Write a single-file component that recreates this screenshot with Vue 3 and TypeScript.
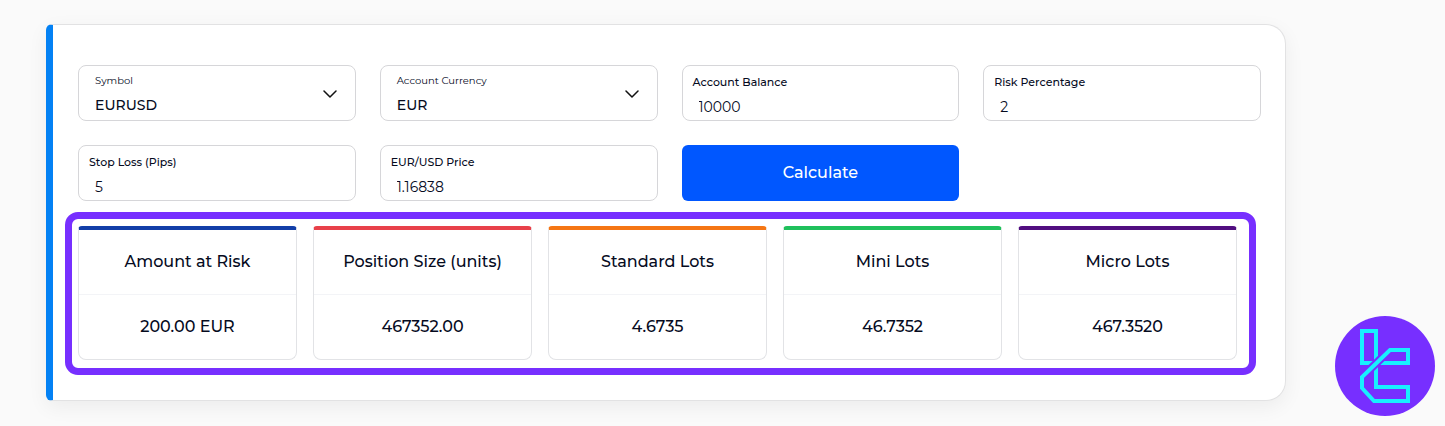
<script setup lang="ts">
import { ref } from 'vue'

const symbol = ref('EURUSD')
const currency = ref('EUR')
const balance = ref('10000')
const risk = ref('2')
const stopLoss = ref('5')
const price = ref('1.16838')

interface Result {
  title: string
  value: string
  tone: string
}

const results = ref<Result[]>([
  { title: 'Amount at Risk', value: '200.00 EUR', tone: 'blue' },
  { title: 'Position Size (units)', value: '467352.00', tone: 'red' },
  { title: 'Standard Lots', value: '4.6735', tone: 'orange' },
  { title: 'Mini Lots', value: '46.7352', tone: 'green' },
  { title: 'Micro Lots', value: '467.3520', tone: 'purple' },
])

function calculate(): void {
  const amount = (Number(balance.value) * Number(risk.value)) / 100
  const units = amount / (Number(stopLoss.value) * 0.0001 / Number(price.value))
  const values = [
    `${amount.toFixed(2)} ${currency.value}`,
    units.toFixed(2),
    (units / 100000).toFixed(4),
    (units / 10000).toFixed(4),
    (units / 1000).toFixed(4),
  ]
  results.value = results.value.map((r, i) => ({ ...r, value: values[i] }))
}
</script>

<template>
  <main class="page">
    <section class="panel">
      <form class="fields" @submit.prevent="calculate">
        <div class="field field-select">
          <label for="symbol">Symbol</label>
          <select id="symbol" v-model="symbol">
            <option>EURUSD</option>
          </select>
          <svg class="chevron" viewBox="0 0 14 8" aria-hidden="true"><path d="M1 1l6 6 6-6" /></svg>
        </div>
        <div class="field field-select">
          <label for="currency">Account Currency</label>
          <select id="currency" v-model="currency">
            <option>EUR</option>
          </select>
          <svg class="chevron" viewBox="0 0 14 8" aria-hidden="true"><path d="M1 1l6 6 6-6" /></svg>
        </div>
        <div class="field">
          <label for="balance">Account Balance</label>
          <input id="balance" v-model="balance" type="text" inputmode="decimal" />
        </div>
        <div class="field">
          <label for="risk">Risk Percentage</label>
          <input id="risk" v-model="risk" type="text" inputmode="decimal" />
        </div>
        <div class="field">
          <label for="stop-loss">Stop Loss (Pips)</label>
          <input id="stop-loss" v-model="stopLoss" type="text" inputmode="decimal" />
        </div>
        <div class="field">
          <label for="price">EUR/USD Price</label>
          <input id="price" v-model="price" type="text" inputmode="decimal" />
        </div>
        <button class="calculate" type="submit">Calculate</button>
      </form>

      <div class="results">
        <article v-for="r in results" :key="r.title" class="result" :class="r.tone">
          <h2>{{ r.title }}</h2>
          <p>{{ r.value }}</p>
        </article>
      </div>
    </section>

    <svg class="brand" viewBox="0 0 100 100" role="img" aria-label="Logo">
      <circle cx="50" cy="50" r="50" />
      <path d="M41 47H27V15H41V47" />
      <path d="M42 47H73V34H55" />
      <path d="M41 48V71H73V85H39" />
      <path class="gap" d="M54 35L30 58" />
      <path d="M60 34H55L27 61V72L39 85H45" />
    </svg>
  </main>
</template>

<style>
body {
  margin: 0;
  background: #fafafa;
}
</style>

<style scoped>
.page {
  padding: 24px 159px 25px 46px;
  font-family: Montserrat, Inter, "Open Sans", sans-serif;
  color: #060b1e;
}

.panel {
  box-sizing: border-box;
  padding: 40px 24px 25px 25px;
  background: #fff;
  border: 1px solid #e2e2e3;
  border-left: 7px solid #0381f4;
  border-radius: 6px 20px 20px 6px;
  box-shadow: 0 6px 20px rgba(0, 0, 0, 0.06);
}

.fields {
  display: grid;
  grid-template-columns: repeat(4, minmax(0, 1fr));
  gap: 24px;
}

.field {
  position: relative;
  box-sizing: border-box;
  height: 56px;
  padding: 8px 10px 3px;
  display: flex;
  flex-direction: column;
  gap: 7px;
  background: #fff;
  border: 1px solid #d6d6d9;
  border-radius: 8px;
}

.field label {
  font-size: 11px;
  font-weight: 500;
  line-height: 16px;
  color: #060b1e;
}

.field input,
.field select {
  width: 100%;
  height: 20px;
  box-sizing: border-box;
  margin: 0;
  padding: 0 6px;
  border: 0;
  outline: 0;
  background: transparent;
  font-family: inherit;
  font-size: 14px;
  line-height: 20px;
  color: #060b1e;
}

.field-select {
  gap: 6px;
  padding: 7px 16px 5px;
}

.field-select label {
  font-size: 10px;
  font-weight: 400;
}

.field select {
  padding: 0;
  font-weight: 500;
  appearance: none;
}

.chevron {
  position: absolute;
  top: 24px;
  right: 18px;
  width: 14px;
  height: 8px;
  fill: none;
  stroke: #111;
  stroke-width: 1.5;
  stroke-linecap: round;
  stroke-linejoin: round;
  pointer-events: none;
}

.calculate {
  height: 56px;
  padding: 0 0 2px;
  border: 0;
  border-radius: 6px;
  background: #0057ff;
  color: #fff;
  font-family: inherit;
  font-size: 16px;
  font-weight: 500;
  cursor: pointer;
}

.results {
  display: grid;
  grid-template-columns: repeat(5, minmax(0, 1fr));
  gap: 16px;
  margin: 11px 5px 0 -13px;
  padding: 7px 12px 8px 6px;
  border: 7px solid #772fff;
  border-radius: 13px;
}

.result {
  border: 1px solid #e2e3e6;
  border-top: 4px solid;
  border-radius: 4px 4px 8px 8px;
  text-align: center;
}

.result h2,
.result p {
  margin: 0;
  font-size: 16px;
  font-weight: 500;
  line-height: 64px;
}

.result h2 {
  border-bottom: 1px solid #f3f4f7;
}

.blue { border-top-color: #123ea8; }
.red { border-top-color: #e8414a; }
.orange { border-top-color: #f57614; }
.green { border-top-color: #20c05c; }
.purple { border-top-color: #510e80; }

.brand {
  position: fixed;
  right: 10px;
  bottom: 10px;
  width: 100px;
  height: 100px;
}

.brand circle {
  fill: #772fff;
}

.brand path {
  fill: none;
  stroke: #17f0ff;
  stroke-width: 4;
}

.brand .gap {
  stroke: #772fff;
  stroke-width: 8;
}
</style>
